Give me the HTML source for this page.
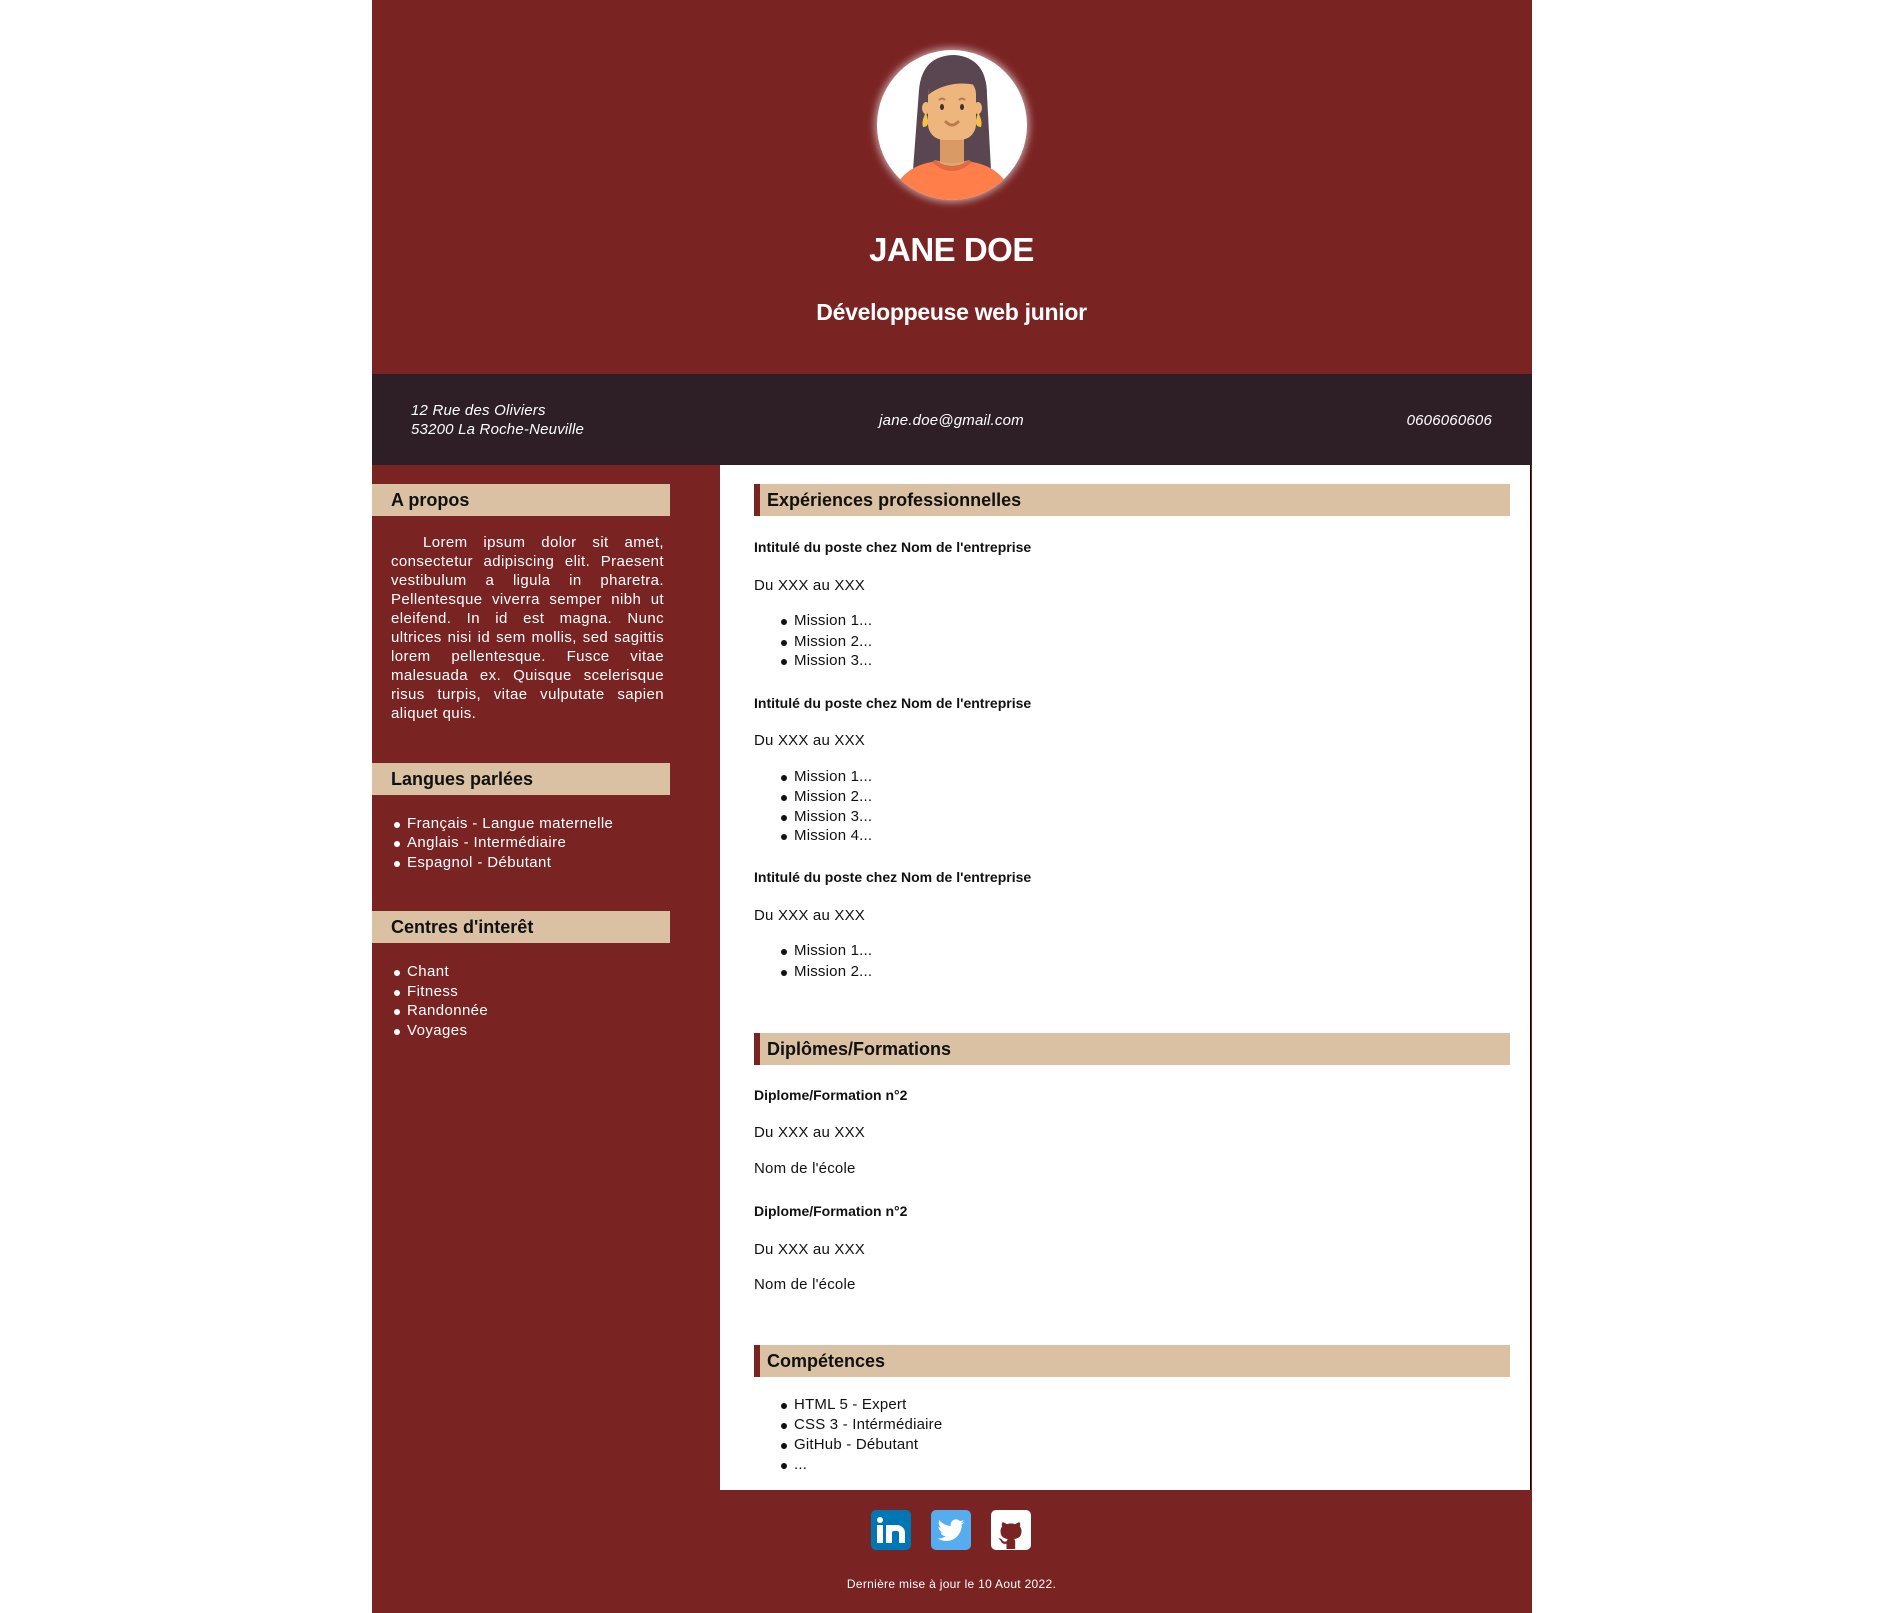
<!DOCTYPE html>
<html><head><meta charset="utf-8">
<style>
*{margin:0;padding:0;box-sizing:border-box}
body{width:1903px;height:1613px;background:#fff;position:relative;overflow:hidden;font-family:"Liberation Sans",sans-serif}
.a{position:absolute;white-space:nowrap}
#c{position:absolute;left:372px;top:0;width:1160px;height:1613px;background:#7a2323}
.dark{position:absolute;left:372px;top:374px;width:1160px;height:91px;background:#2d1f25}
.white{position:absolute;left:720px;top:465px;width:811px;height:1025px;background:#fff;border-right:1px solid #000}
.sh{position:absolute;left:372px;width:298px;height:32px;background:#dbc1a4;font-weight:bold;font-size:18px;line-height:32px;padding-left:19px;color:#111}
.mh{position:absolute;left:754px;width:756px;height:32px;background:#dbc1a4;border-left:6px solid #7a2323;font-weight:bold;font-size:18px;line-height:32px;padding-left:7px;color:#111}
.w{color:#fff;font-size:15px;line-height:19px;letter-spacing:0.4px}
.k{color:#111;font-size:15px;line-height:20px;letter-spacing:0.2px}
.b{font-weight:bold;font-size:14px;letter-spacing:0}
.dot{position:absolute;width:6px;height:6px;border-radius:3px}
.it{color:#fff;font-style:italic;font-size:15px;line-height:19px;letter-spacing:0.2px}
</style></head><body>
<div id="c"></div>
<div class="dark"></div>
<div class="white"></div>

<svg class="a" style="left:870px;top:43px;overflow:visible" width="164" height="164" viewBox="-7 -7 164 164">
<defs><clipPath id="cp"><circle cx="75" cy="75" r="75"/></clipPath>
<filter id="g" x="-30%" y="-30%" width="160%" height="160%"><feGaussianBlur stdDeviation="4"/></filter></defs>
<circle cx="75" cy="75" r="77" fill="#fff" opacity="0.6" filter="url(#g)"/>
<circle cx="75" cy="75" r="75" fill="#fff"/>
<g clip-path="url(#cp)">
<path d="M42 40 Q45 5 78 5 Q110 8 110 45 L114 120 L36 120 Z" fill="#5a4650"/>
<rect x="63" y="85" width="24" height="30" fill="#d99a66"/>
<path d="M10 160 Q18 118 55 112 Q75 125 95 112 Q132 118 140 160 Z" fill="#ff7e4a"/>
<path d="M55 112 Q75 130 95 112 L92 110 Q75 122 58 110Z" fill="#e0693e"/>
<path d="M58 110 Q75 122 92 110 Q75 116 58 110Z" fill="#e0a874"/>
<rect x="51" y="28" width="48" height="62" rx="16" fill="#eeb57c"/>
<path d="M51 45 Q52 25 72 25 L90 25 Q99 28 99 40 L99 35 Q75 30 55 42Z" fill="#5a4650"/>
<ellipse cx="49" cy="58" rx="4" ry="6" fill="#eeb57c"/><ellipse cx="101" cy="58" rx="4" ry="6" fill="#eeb57c"/>
<path d="M49 62 Q44 72 46 77 Q52 77 51 70Z" fill="#f3c24a"/><path d="M101 62 Q106 72 104 77 Q98 77 99 70Z" fill="#f3c24a"/>
<ellipse cx="65" cy="57" rx="2" ry="3" fill="#3e2f35"/><ellipse cx="85" cy="57" rx="2" ry="3" fill="#3e2f35"/>
<path d="M62 50 q3 -3 6 0" stroke="#b87a4e" stroke-width="2" fill="none"/><path d="M82 50 q3 -3 6 0" stroke="#b87a4e" stroke-width="2" fill="none"/>
<path d="M69 72 Q75 78 81 72" stroke="#b87a4e" stroke-width="3" fill="none" stroke-linecap="round"/>
</g></svg>

<div class="a" style="left:0;width:1903px;text-align:center;top:230px;color:#fff;font-weight:bold;font-size:33px;line-height:40px;letter-spacing:-0.5px">JANE DOE</div>
<div class="a" style="left:0;width:1903px;text-align:center;top:297px;color:#fff;font-weight:bold;font-size:23px;line-height:30px;letter-spacing:-0.3px">Développeuse web junior</div>

<div class="a it" style="left:411px;top:401px">12 Rue des Oliviers<br>53200 La Roche-Neuville</div>
<div class="a it" style="left:0;width:1903px;text-align:center;top:411px">jane.doe@gmail.com</div>
<div class="a it" style="left:1300px;width:192px;text-align:right;top:411px">0606060606</div>

<div class="sh" style="top:484px">A propos</div>
<div class="a w" style="left:391px;top:533px;width:273px;white-space:normal;text-align:justify;text-indent:32px">Lorem ipsum dolor sit amet, consectetur adipiscing elit. Praesent vestibulum a ligula in pharetra. Pellentesque viverra semper nibh ut eleifend. In id est magna. Nunc ultrices nisi id sem mollis, sed sagittis lorem pellentesque. Fusce vitae malesuada ex. Quisque scelerisque risus turpis, vitae vulputate sapien aliquet quis.</div>

<div class="sh" style="top:763px">Langues parlées</div>
<div class="sh" style="top:911px">Centres d'interêt</div>

<div class="mh" style="top:484px">Expériences professionnelles</div>
<div class="mh" style="top:1033px">Diplômes/Formations</div>
<div class="mh" style="top:1345px">Compétences</div>

<div class="a" style="left:871px;top:1510px;width:40px;height:40px;border-radius:5px;background:#0077b5"></div>
<div class="a" style="left:877px;top:1517px;width:6px;height:6px;border-radius:3px;background:#fff"></div>
<div class="a" style="left:877px;top:1525px;width:6px;height:18px;background:#fff"></div>
<div class="a" style="left:886px;top:1525px;width:6px;height:18px;background:#fff"></div>
<div class="a" style="left:886px;top:1525px;width:19px;height:18px;border:6px solid #fff;border-bottom:none;border-radius:8px 8px 0 0"></div>
<div class="a" style="left:931px;top:1510px;width:40px;height:40px;border-radius:5px;background:#55acee"></div>
<svg class="a" style="left:935px;top:1514px" width="32" height="32" viewBox="0 0 24 24"><path fill="#fff" d="M22 6c-.7.3-1.5.5-2.4.6.9-.5 1.5-1.3 1.8-2.3-.8.5-1.700.8-2.6 1-.8-.8-1.900-1.300-3-1.300-2.300 0-4.100 1.800-4.100 4.100 0 .3 0 .6.1.9C8.4 8.8 5.4 7.2 3.4 4.7c-.4.6-.6 1.300-.6 2.100 0 1.400.7 2.700 1.800 3.400-.7 0-1.300-.2-1.900-.5 0 2 1.400 3.700 3.300 4-.6.2-1.200.2-1.800.1.5 1.600 2 2.800 3.800 2.800-1.400 1.100-3.200 1.800-5.100 1.800H2c1.800 1.200 4 1.800 6.300 1.800 7.500 0 11.700-6.200 11.700-11.700v-.5c.8-.6 1.500-1.300 2-2.100z"/></svg>
<div class="a" style="left:991px;top:1510px;width:40px;height:40px;border-radius:5px;background:#fff"></div>
<svg class="a" style="left:993px;top:1512px" width="36" height="38" viewBox="0 0 24 24"><path fill="#7a2323" d="M9 24v-3.5c-3 .6-3.6-1.4-3.6-1.4-.5-1.2-1.2-1.6-1.2-1.6-1-.7.1-.7.1-.7 1.1.1 1.7 1.1 1.7 1.1 1 1.7 2.6 1.2 3.2.9.1-.7.4-1.2.7-1.5-2.4-.3-4.9-1.2-4.9-5.3 0-1.2.4-2.1 1.1-2.9-.1-.3-.5-1.4.1-2.8 0 0 .9-.3 3 1.1.9-.2 1.8-.4 2.8-.4s1.9.1 2.8.4c2.1-1.4 3-1.1 3-1.1.6 1.5.2 2.6.1 2.8.7.8 1.1 1.7 1.1 2.9 0 4.1-2.5 5-4.9 5.3.4.3.7 1 .7 2V24z"/></svg>
<div class="a" style="left:0;width:1903px;text-align:center;top:1576px;color:#fff;font-size:12px;line-height:16px;letter-spacing:0.3px">Dernière mise à jour le 10 Aout 2022.</div>

<div id="lists"></div>
<script>
var L=document.getElementById('lists'),h='';
function t(x,y,s,cls){h+='<div class="a '+cls+'" style="left:'+x+'px;top:'+(y-10)+'px">'+s+'</div>';}
function li(x,y,s,col,cls){h+='<div class="dot" style="left:'+(x-13)+'px;top:'+(y-2)+'px;background:'+col+'"></div>';t(x,y,s,cls);}
[[824,'Français - Langue maternelle'],[843,'Anglais - Intermédiaire'],[863,'Espagnol - Débutant'],[972,'Chant'],[992,'Fitness'],[1011,'Randonnée'],[1031,'Voyages']].forEach(function(a){li(407,a[0],a[1],'#fff','w');});
var J='Intitulé du poste chez Nom de l\'entreprise';
t(754,547,J,'k b');t(754,586,'Du XXX au XXX','k');
[621,642,661].forEach(function(y,i){li(794,y,'Mission '+(i+1)+'...','#111','k');});
t(754,703,J,'k b');t(754,741,'Du XXX au XXX','k');
[777,797,817,836].forEach(function(y,i){li(794,y,'Mission '+(i+1)+'...','#111','k');});
t(754,877,J,'k b');t(754,916,'Du XXX au XXX','k');
[951,972].forEach(function(y,i){li(794,y,'Mission '+(i+1)+'...','#111','k');});
t(754,1095,'Diplome/Formation n°2','k b');t(754,1133,'Du XXX au XXX','k');t(754,1169,'Nom de l\'école','k');
t(754,1211,'Diplome/Formation n°2','k b');t(754,1250,'Du XXX au XXX','k');t(754,1285,'Nom de l\'école','k');
[[1405,'HTML 5 - Expert'],[1425,'CSS 3 - Intérmédiaire'],[1445,'GitHub - Débutant'],[1465,'...']].forEach(function(a){li(794,a[0],a[1],'#111','k');});
L.innerHTML=h;
</script>
</body></html>
